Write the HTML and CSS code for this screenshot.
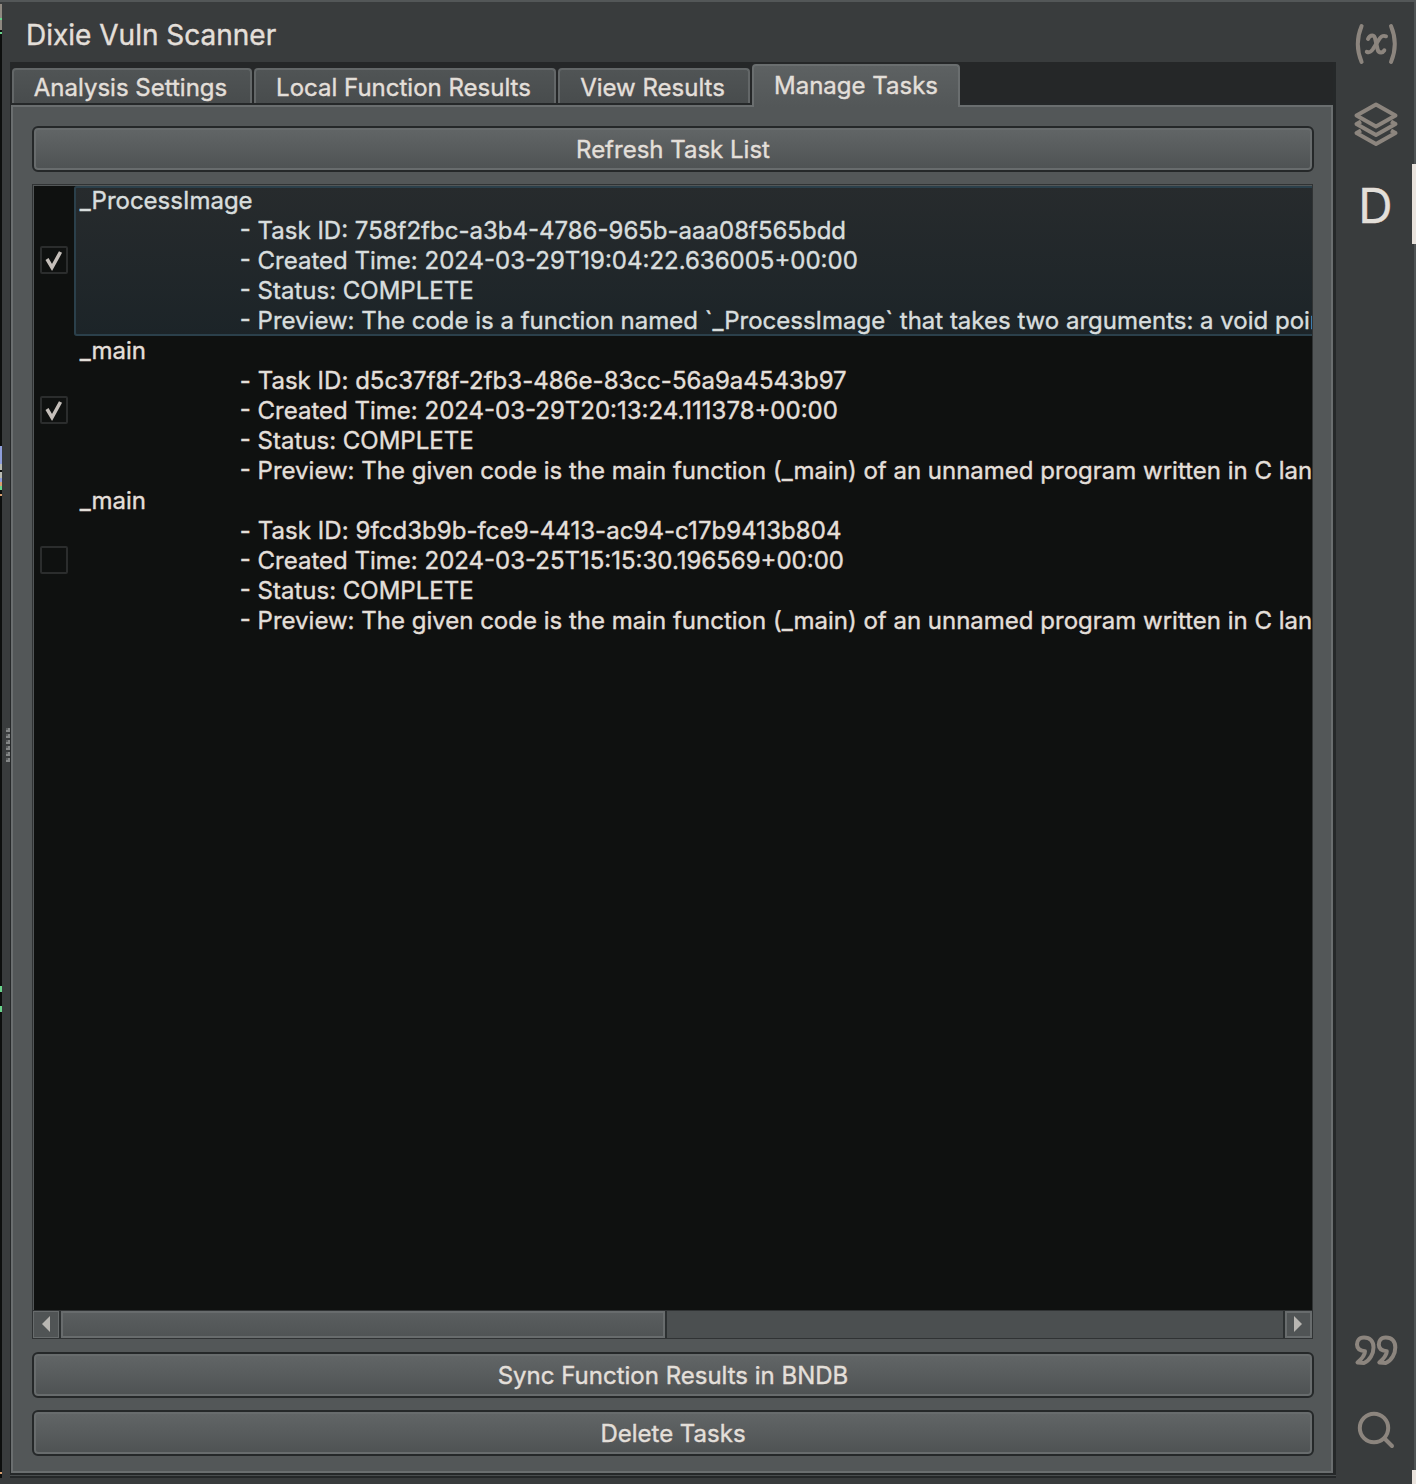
FILE: index.html
```html
<!DOCTYPE html>
<html lang="en">
<head>
<meta charset="utf-8">
<title>Dixie Vuln Scanner</title>
<link rel="stylesheet" href="styles.css">
</head>
<body>
<div class="window">
  <div class="editor-edge"></div>
  <div class="splitter"><i></i><i></i><i></i><i></i><i></i><i></i></div>
  <main class="scanner">
    <h1 class="title"><span>Dixie Vuln Scanner</span></h1>
    <section class="tab-widget">
      <nav class="tabs">
        <div class="tab tab-analysis"><span>Analysis Settings</span></div>
        <div class="tab tab-local"><span>Local Function Results</span></div>
        <div class="tab tab-view"><span>View Results</span></div>
        <div class="tab tab-manage active"><span>Manage Tasks</span></div>
      </nav>
      <div class="panel">
        <button class="btn"><span>Refresh Task List</span></button>
        <div class="task-list">
          <div class="rows">
            <div class="row">
              <div class="check"><span class="box"><svg viewBox="0 0 28 28"><path d="M7 13 12 21.500 20.500 6"/></svg></span></div>
              <div class="item selected">
                <p>_ProcessImage</p>
                <p class="detail">- Task ID: 758f2fbc-a3b4-4786-965b-aaa08f565bdd</p>
                <p class="detail">- Created Time: 2024-03-29T19:04:22.636005+00:00</p>
                <p class="detail">- Status: COMPLETE</p>
                <p class="detail">- Preview: The code is a function named `_ProcessImage` that takes two arguments: a void pointer</p>
              </div>
            </div>
            <div class="row">
              <div class="check"><span class="box"><svg viewBox="0 0 28 28"><path d="M7 13 12 21.500 20.500 6"/></svg></span></div>
              <div class="item">
                <p>_main</p>
                <p class="detail slightly-wide">- Task ID: d5c37f8f-2fb3-486e-83cc-56a9a4543b97</p>
                <p class="detail">- Created Time: 2024-03-29T20:13:24.111378+00:00</p>
                <p class="detail">- Status: COMPLETE</p>
                <p class="detail">- Preview: The given code is the main function (_main) of an unnamed program written in C language</p>
              </div>
            </div>
            <div class="row">
              <div class="check"><span class="box"></span></div>
              <div class="item">
                <p>_main</p>
                <p class="detail wide">- Task ID: 9fcd3b9b-fce9-4413-ac94-c17b9413b804</p>
                <p class="detail">- Created Time: 2024-03-25T15:15:30.196569+00:00</p>
                <p class="detail">- Status: COMPLETE</p>
                <p class="detail">- Preview: The given code is the main function (_main) of an unnamed program written in C language</p>
              </div>
            </div>
          </div>
          <div class="scrollbar">
            <div class="arrow arrow-left"><svg viewBox="0 0 8 16"><path d="M8 0v16L0 8z"/></svg></div>
            <div class="thumb"></div>
            <div class="track"></div>
            <div class="arrow arrow-right"><svg viewBox="0 0 8 16"><path d="M0 0v16l8-8z"/></svg></div>
          </div>
        </div>
        <button class="btn"><span>Sync Function Results in BNDB</span></button>
        <button class="btn btn-last"><span>Delete Tasks</span></button>
      </div>
    </section>
  </main>
  <aside class="sidebar">
    <div class="tool"><svg viewBox="0 0 80 80"><g fill="none" stroke="currentColor" stroke-width="4" stroke-linecap="round" stroke-linejoin="round"><path d="M35.600 26Q28 44 35.600 62M65 26Q72.600 44 65 62"/><path d="M42 39C43 36.500 44.500 35.500 46.500 35.500C48.500 35.500 49 37.500 49.500 40L51.500 49C52 51.500 53 52.500 55 52.500Q57 52.300 58.300 50.300"/><path d="M60 36.300C56.500 35 55 36.500 53 39.500L47 49C45 52 43.500 53 40.800 51.800"/></g></svg></div>
    <div class="tool"><svg viewBox="0 0 80 80"><g fill="none" stroke="currentColor" stroke-width="4" stroke-linejoin="round"><path d="M50 24.500 69.500 35.500 50 46.500 30.500 35.500Z"/><path d="M35 41.500 30.500 44 50 55 69.500 44 65 41.500"/><path d="M35 50.500 30.500 53 50 64 69.500 53 65 50.500"/></g></svg></div>
    <div class="tool current"><span>D</span></div>
    <div class="spacer"></div>
    <div class="tool"><svg viewBox="0 0 80 80"><g fill="none" stroke="currentColor" stroke-width="4" stroke-linejoin="round"><path d="M38 27.500C32.500 27.500 31 31.500 31 34.500C31 38.500 33.500 40.700 39 41.200Q39 46 31.500 52.500L38 53C44 50.500 47.500 43.500 47.500 37.500C47.500 31 44 27.500 38 27.500Z"/><path d="M59.800 27.500C54.300 27.500 52.800 31.500 52.800 34.500C52.800 38.500 55.300 40.700 60.800 41.200Q60.800 46 53.300 52.500L59.800 53C65.800 50.500 69.300 43.500 69.300 37.500C69.300 31 65.800 27.500 59.800 27.500Z"/></g></svg></div>
    <div class="tool"><svg viewBox="0 0 80 80"><g fill="none" stroke="currentColor" stroke-width="4" stroke-linecap="round"><circle cx="48" cy="38" r="14.200"/><path d="M58.500 48.500 66 56"/></g></svg></div>
    <div class="sidebar-foot"></div>
  </aside>
</div>
</body>
</html>
```
FILE: styles.css
```css
* { box-sizing: border-box; }

body {
  margin: 0;
  background: #393c3d;
  color: #e3dfd9;
  font: 400 24px/30px Inter, "Liberation Sans", sans-serif;
  -webkit-text-stroke: 0.4px currentColor;
}

.window {
  display: flex;
  width: 1416px;
  height: 1484px;
  overflow: hidden;
  border-top: 2px solid #535758;
}

.editor-edge {
  width: 2px;
  height: 1476px;
  background: linear-gradient(#393c3d 2px, #8f8981 2px 16px, #69d48b 16px 18px, #8f8981 18px 28px, #0d0f0e 28px 30px, #69d48b 30px 32px, #0d0f0e 32px 444px, #8f9edb 444px 462px, #b9bab2 462px 468px, #0d0f0e 468px 470px, #b9bab2 470px 476px, #8f9edb 476px 480px, #d9a070 480px 484px, #69d48b 484px 488px, #0d0f0e 488px 492px, #d9a070 492px 494px, #0d0f0e 494px 984px, #69d48b 984px 990px, #0d0f0e 990px 1004px, #69d48b 1004px 1010px, #0d0f0e 1010px 1470px, #d9a070 1470px 1472px, #0d0f0e 1472px);
}

.splitter {
  display: flex;
  flex-direction: column;
  gap: 2px;
  width: 8px;
  padding: 726px 0 0 4px;
}

.splitter i {
  width: 4px;
  height: 4px;
  background: linear-gradient(#5a5d5e, #5a5d5e) 0 0 / 2px 2px no-repeat #838686;
}

.scanner {
  display: flex;
  flex-direction: column;
  width: 1326px;
}

.title {
  height: 60px;
  margin: 0;
  padding: 15px 0 0 16px;
  font-size: 28px;
  font-weight: 400;
  line-height: 36px;
}

.tab-widget {
  display: flex;
  flex-direction: column;
  height: 1416px;
  padding: 0 3px 3px 1px;
  background: #252829;
  box-shadow: inset 0 -2px #252829, inset 0 -3px #494d4e;
}

.tabs {
  display: flex;
  align-items: flex-end;
  gap: 2px;
  height: 43px;
  padding-left: 1px;
  background: #252728;
  border-bottom: 2px solid #252829;
}

.tab {
  height: 35px;
  padding: 3px 3px 0 0;
  border: 2px solid #636768;
  border-bottom: 0;
  border-radius: 4px 4px 0 0;
  background: linear-gradient(#505455, #484c4d);
  text-align: center;
  white-space: nowrap;
}

.tab-analysis { width: 240px; }
.tab-local { width: 302px; }
.tab-view { width: 192px; }
.tab-manage { width: 208px; }

.tab.active {
  z-index: 1;
  height: 43px;
  margin-bottom: -4px;
  padding: 5px 0 0;
  border-color: #6a6e6f;
  background: linear-gradient(#5d6162, #535758);
}

.panel {
  display: flex;
  flex-direction: column;
  height: 1368px;
  padding: 19px 17px 15px 19px;
  border: 2px solid #6a6e6f;
  background: #535758;
}

.btn {
  height: 46px;
  padding: 2px 0 0;
  border: 2px solid #252829;
  border-radius: 6px;
  background: linear-gradient(#626667, #4e5253);
  box-shadow: inset 0 0 0 2px #686c6d;
  color: inherit;
  font: inherit;
}

.btn-last { margin-top: 12px; }

.task-list {
  display: flex;
  flex-direction: column;
  width: 1281px;
  height: 1155px;
  margin: 12px 0 13px;
  border: 1px solid #303334;
  background: #0f1110;
  overflow: hidden;
}

.rows {
  height: 1125px;
  padding-top: 1px;
  border-left: 1px solid #535758;
  box-shadow: inset 0 1px #535758;
}

.row { display: flex; height: 150px; }

.check {
  display: flex;
  align-items: center;
  flex: none;
  width: 40px;
  padding: 0 0 2px 6px;
}

.box {
  width: 28px;
  height: 28px;
  border: 2px solid #2b2d2d;
  border-radius: 2px;
}

.box svg { display: block; width: 28px; height: 28px; margin: -2px; }
.box path { fill: none; stroke: #c5bfba; stroke-width: 3.500; }

.item {
  flex: none;
  width: 1260px;
  padding-left: 5.8px;
  overflow: hidden;
  white-space: nowrap;
}

.item p { margin: 0; }
.item .detail { padding-left: 160px; }
.item .wide { letter-spacing: 0.06px; }
.item .slightly-wide { letter-spacing: 0.03px; }

.selected {
  background: linear-gradient(#272b2d, #1c2428);
  box-shadow: inset 0 0 0 2px #2b404b;
  border-radius: 3px;
  color: #d8dddd;
}

.scrollbar {
  display: flex;
  height: 28px;
  border-top: 1px solid #303334;
  background: #4b4f50;
}

.arrow {
  display: flex;
  align-items: center;
  justify-content: center;
  width: 26px;
  height: 27px;
  padding-bottom: 1px;
  border: 1px solid #686c6d;
  background: #505455;
}

.arrow svg { width: 8px; height: 16px; fill: #b8b6b2; }
.arrow-left { margin-right: 2px; }
.arrow-right { width: 27px; padding-right: 2px; border-width: 2px; box-shadow: -2px 0 #2c3031; }

.thumb {
  width: 604px;
  border: 2px solid #686c6d;
  background: linear-gradient(#5a5e5f, #505455);
  box-shadow: -2px 0 #2c3031, 2px 0 #2c3031;
}

.track { flex: 1; }

.sidebar {
  display: flex;
  flex-direction: column;
  width: 80px;
  padding-top: 2px;
  border-right: 2px solid #4f5354;
  color: #8c857e;
}

.tool { position: relative; height: 80px; }
.tool svg { display: block; width: 80px; height: 80px; margin-left: -10px; }
.tool:nth-child(1) svg,
.tool:nth-child(2) svg { margin-top: -4px; }

.current {
  padding-left: 1px;
  color: #e3dfd9;
  font-size: 47.5px;
  font-weight: 400;
  line-height: 83px;
  text-align: center;
}

.current::after {
  content: "";
  position: absolute;
  top: 0;
  right: -2px;
  width: 4px;
  height: 80px;
  background: #e9e3dd;
}

.spacer { height: 1066px; flex: none; }

.sidebar-foot {
  width: 4px;
  height: 14px;
  margin: 0 -2px 0 auto;
  background: #e9e3dd;
}
```
